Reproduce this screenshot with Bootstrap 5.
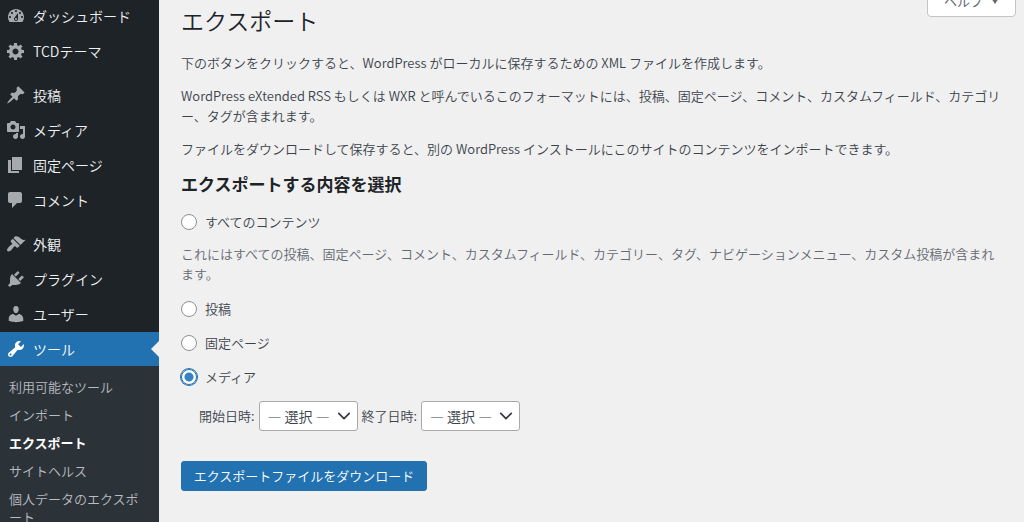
<!DOCTYPE html>
<html lang="ja">
<head>
<meta charset="utf-8">
<meta name="viewport" content="width=device-width, initial-scale=1">
<title>エクスポート</title>
<link href="https://cdn.jsdelivr.net/npm/bootstrap@5.3.0/dist/css/bootstrap.min.css" rel="stylesheet">
<style>
body { background: #f0f0f1; color: #3c434a; font: 350 13px/20px "Noto Sans CJK JP", sans-serif; }
.side { width: 159px; background: #1d2327; margin-top: -1px; }
.side-group { display: grid; gap: 1px; margin: 0 0 10px; }
.side-group:last-child { margin: 0; }
.side-link { height: 34px; padding: 0 0 1px 6px; gap: 7px; font-size: 14px; color: #f0f0f1; position: relative; }
.side-link svg { width: 20px; height: 20px; fill: #a7aaad; }
.side-link.current { background: #2271b1; color: #fff; }
.side-link.current svg { fill: #fff; }
.side-link.current::after { content: ""; position: absolute; right: 0; top: 9px; border: 8px solid transparent; border-right-color: #f0f0f1; border-left-width: 0; }
.side-sub { background: #2c3338; padding: 7px 0; margin-top: -1px; }
.side-sub a { display: block; padding: 5px 9px; line-height: 18px; color: #b9bcc0; text-decoration: none; }
.side-sub a.current { color: #fff; font-weight: 700; }
.page { padding: 0 8px 0 22px; }
.page-title { font-size: 23px; line-height: 30px; font-weight: 350; color: #1d2327; margin: 5px 0 18px; }
.help-btn { width: 89px; height: 32px; margin-top: -15px; background: #fff; border: 1px solid #c3c4c7; border-radius: 0 0 4px 4px; color: #646970; font-size: 13px; }
.copy p { margin-bottom: 13px; padding-right: 12px; }
.section-title { font-size: 17px; line-height: 24px; font-weight: 700; color: #1d2327; margin: 13px 0 16px; }
.choice { display: flex; align-items: center; gap: 8px; height: 20px; margin-bottom: 14px; }
.choice .form-check-input { width: 16px; height: 16px; margin: 0; border: 1px solid #8c8f94; background: #fff; box-shadow: none; }
.choice .form-check-input:checked { border-color: #2271b1; box-shadow: 0 0 0 1px #2271b1; background: radial-gradient(circle, #3582c4 4px, #fff 5px); }
.hint { color: #646970; margin: -2px 0 15px; padding-right: 12px; }
.dates { gap: 4px; padding-left: 18px; margin-bottom: 30px; }
.date-select { width: 99px; height: 30px; padding: 0 24px 0 8px; font-size: 14px; font-weight: 350; line-height: 28px; color: #3c434a; border: 1px solid #a7aaad; border-radius: 3px; background-color: #fff; background-position: right 6px center; background-size: 14px 14px; }
.go-btn { height: 30px; width: 246px; padding: 0; font-size: 13px; font-weight: 350; line-height: 28px; color: #fff; background: #2271b1; border: 1px solid #2271b1; border-radius: 3px; }
</style>
</head>
<body>
<div class="d-flex vh-100 overflow-hidden">
  <nav class="side flex-shrink-0" aria-label="メインメニュー">
    <div class="side-group">
      <a href="#" class="side-link d-flex align-items-center text-decoration-none"><svg viewBox="0 0 20 20"><path fill-rule="evenodd" d="M3.76 16h12.48c1.1-1.37 1.76-3.11 1.76-5 0-4.42-3.58-8-8-8s-8 3.58-8 8c0 1.89.66 3.63 1.76 5zM10 4c.55 0 1 .45 1 1s-.45 1-1 1-1-.45-1-1 .45-1 1-1zM6 6c.55 0 1 .45 1 1s-.45 1-1 1-1-.45-1-1 .45-1 1-1zm8 0c.55 0 1 .45 1 1s-.45 1-1 1-1-.45-1-1 .45-1 1-1zm-5.37 5.55L12 7v6c0 1.1-.9 2-2 2s-2-.9-2-2c0-.57.24-1.08.63-1.45zM4 10c.55 0 1 .45 1 1s-.45 1-1 1-1-.45-1-1 .45-1 1-1zm12 0c.55 0 1 .45 1 1s-.45 1-1 1-1-.45-1-1 .45-1 1-1zm-5 3c0-.55-.45-1-1-1s-1 .45-1 1 .45 1 1 1 1-.45 1-1z"/></svg>ダッシュボード</a>
      <a href="#" class="side-link d-flex align-items-center text-decoration-none"><svg viewBox="0 0 20 20"><path fill-rule="evenodd" d="M18 12h-2.18c-.17.7-.44 1.35-.81 1.93l1.54 1.54-2.1 2.1-1.54-1.54c-.58.36-1.23.63-1.91.79V19H8v-2.18c-.68-.16-1.33-.43-1.91-.79l-1.54 1.54-2.12-2.12 1.54-1.54c-.36-.58-.63-1.23-.79-1.91H1V9.03h2.17c.16-.7.44-1.35.8-1.94L2.43 5.55l2.1-2.1 1.54 1.54c.58-.37 1.24-.64 1.93-.81V2h3v2.18c.68.16 1.33.43 1.91.79l1.54-1.54 2.12 2.12-1.54 1.54c.36.59.64 1.24.8 1.94H18V12zm-8.5 1.5c1.66 0 3-1.34 3-3s-1.34-3-3-3-3 1.34-3 3 1.34 3 3 3z"/></svg>TCDテーマ</a>
    </div>
    <div class="side-group">
      <a href="#" class="side-link d-flex align-items-center text-decoration-none"><svg viewBox="0 0 20 20"><path d="M10.44 3.02l1.82-1.82 6.36 6.35-1.83 1.82c-1.05-.68-2.48-.57-3.41.36l-.75.75c-.92.93-1.04 2.35-.35 3.41l-1.83 1.82-2.41-2.41-2.8 2.79c-.42.42-3.38 2.71-3.8 2.29s1.86-3.39 2.28-3.81l2.79-2.79L4.1 9.36l1.83-1.82c1.05.69 2.48.57 3.4-.36l.75-.75c.93-.92 1.05-2.35.36-3.41z"/></svg>投稿</a>
      <a href="#" class="side-link d-flex align-items-center text-decoration-none"><svg viewBox="0 0 20 20"><path fill-rule="evenodd" d="M13 11V4c0-.55-.45-1-1-1h-1.67L9 1H5L3.67 3H2c-.55 0-1 .45-1 1v7c0 .55.45 1 1 1h10c.55 0 1-.45 1-1zM7 4.5c1.38 0 2.5 1.12 2.5 2.5S8.38 9.5 7 9.5 4.5 8.38 4.5 7 5.62 4.5 7 4.5zM14 6h5v10.5c0 1.38-1.12 2.5-2.5 2.5S14 17.88 14 16.5s1.12-2.5 2.5-2.5c.17 0 .34.02.5.05V9h-3V6zm-4 8.05V13h2v3.5c0 1.38-1.12 2.5-2.5 2.5S7 17.88 7 16.5 8.12 14 9.5 14c.17 0 .34.02.5.05z"/></svg>メディア</a>
      <a href="#" class="side-link d-flex align-items-center text-decoration-none"><svg viewBox="0 0 20 20"><path d="M6 15V2h10v13H6zm-1 1h8v2H2V5h3v11z"/></svg>固定ページ</a>
      <a href="#" class="side-link d-flex align-items-center text-decoration-none"><svg viewBox="0 0 20 20"><path d="M4 2h10c1.1 0 2 .9 2 2v7c0 1.1-.9 2-2 2h-3l-5 5v-5H4c-1.1 0-2-.9-2-2V4c0-1.1.9-2 2-2z"/></svg>コメント</a>
    </div>
    <div class="side-group">
      <a href="#" class="side-link d-flex align-items-center text-decoration-none"><svg viewBox="0 0 20 20"><path d="M14.48 11.06L7.41 3.99l1.5-1.5c.5-.56 2.3-.47 3.51.32 1.21.8 1.43 1.28 2.91 2.1 1.18.64 2.45 1.26 4.45.85zm-.71.71L6.7 4.7 4.93 6.47c-.39.39-.39 1.02 0 1.41l1.06 1.06c.39.39.39 1.03 0 1.42-.6.6-1.43 1.11-2.21 1.69-.35.26-.7.53-1.01.84C1.43 14.23.4 16.08 1.4 17.07c.99 1 2.84-.03 4.18-1.36.31-.31.58-.66.85-1.02.57-.78 1.08-1.61 1.69-2.21.39-.39 1.02-.39 1.41 0l1.06 1.06c.39.39 1.02.39 1.41 0z"/></svg>外観</a>
      <a href="#" class="side-link d-flex align-items-center text-decoration-none"><svg viewBox="0 0 20 20"><path d="M13.11 4.36L9.87 7.6 8 5.73l3.24-3.24c.35-.34 1.05-.2 1.56.32.52.51.66 1.21.31 1.55zm-8 1.77l.91-1.12 9.01 9.01-1.19.84c-.71.71-2.63 1.16-3.82 1.16H6.14L4.9 17.26c-.59.59-1.54.59-2.12 0-.59-.58-.59-1.53 0-2.12l1.24-1.24v-3.88c0-1.13.4-3.19 1.09-3.89zm7.26 3.97l3.24-3.24c.34-.35 1.04-.21 1.55.31.52.51.66 1.21.31 1.55l-3.24 3.25z"/></svg>プラグイン</a>
      <a href="#" class="side-link d-flex align-items-center text-decoration-none"><svg viewBox="0 0 20 20"><path d="M10 9.25c-2.27 0-2.73-3.44-2.73-3.44C7 4.02 7.82 2 9.97 2c2.16 0 2.98 2.02 2.71 3.81 0 0-.41 3.44-2.68 3.44zm0 2.57L12.72 10c2.39 0 4.52 2.33 4.52 4.53v2.49s-3.65 1.13-7.24 1.13c-3.65 0-7.24-1.13-7.24-1.13v-2.49c0-2.25 1.94-4.48 4.47-4.48z"/></svg>ユーザー</a>
      <a href="#" class="side-link current d-flex align-items-center text-decoration-none" aria-current="true"><svg viewBox="0 0 20 20"><path fill-rule="evenodd" d="M16.68 9.77c-1.34 1.34-3.3 1.67-4.95.99l-5.41 6.52c-.99.99-2.59.99-3.58 0s-.99-2.59 0-3.57l6.52-5.42c-.68-1.65-.35-3.61.99-4.95 1.28-1.28 3.12-1.62 4.72-1.06l-2.89 2.89 2.82 2.82 2.86-2.87c.53 1.58.18 3.39-1.08 4.65zM3.81 16.21c.4.39 1.04.39 1.43 0 .4-.4.4-1.04 0-1.43-.39-.4-1.03-.4-1.43 0-.39.39-.39 1.03 0 1.43z"/></svg>ツール</a>
      <div class="side-sub">
        <a href="#">利用可能なツール</a>
        <a href="#">インポート</a>
        <a href="#" class="current" aria-current="page">エクスポート</a>
        <a href="#">サイトヘルス</a>
        <a href="#">個人データのエクスポート</a>
      </div>
    </div>
  </nav>
  <main class="page flex-grow-1">
    <header class="d-flex justify-content-between align-items-start">
      <h1 class="page-title">エクスポート</h1>
      <button type="button" class="help-btn d-flex align-items-center justify-content-center gap-2">ヘルプ <svg width="8" height="6" viewBox="0 0 8 6" fill="currentColor"><path d="M0 0h8L4 6z"/></svg></button>
    </header>
    <div class="copy">
      <p>下のボタンをクリックすると、WordPress がローカルに保存するための XML ファイルを作成します。</p>
      <p>WordPress eXtended RSS もしくは WXR と呼んでいるこのフォーマットには、投稿、固定ページ、コメント、カスタムフィールド、カテゴリー、タグが含まれます。</p>
      <p>ファイルをダウンロードして保存すると、別の WordPress インストールにこのサイトのコンテンツをインポートできます。</p>
    </div>
    <h2 class="section-title">エクスポートする内容を選択</h2>
    <form>
      <div class="choice"><input class="form-check-input" type="radio" name="content" id="c-all"><label for="c-all">すべてのコンテンツ</label></div>
      <p class="hint">これにはすべての投稿、固定ページ、コメント、カスタムフィールド、カテゴリー、タグ、ナビゲーションメニュー、カスタム投稿が含まれます。</p>
      <div class="choice"><input class="form-check-input" type="radio" name="content" id="c-posts"><label for="c-posts">投稿</label></div>
      <div class="choice"><input class="form-check-input" type="radio" name="content" id="c-pages"><label for="c-pages">固定ページ</label></div>
      <div class="choice"><input class="form-check-input" type="radio" name="content" id="c-media" checked><label for="c-media">メディア</label></div>
      <div class="dates d-flex align-items-center">
        <label for="d-start">開始日時:</label>
        <select class="form-select date-select" id="d-start"><option>— 選択 —</option></select>
        <label for="d-end">終了日時:</label>
        <select class="form-select date-select" id="d-end"><option>— 選択 —</option></select>
      </div>
      <button type="submit" class="btn go-btn">エクスポートファイルをダウンロード</button>
    </form>
  </main>
</div>
<script src="https://cdn.jsdelivr.net/npm/bootstrap@5.3.0/dist/js/bootstrap.bundle.min.js"></script>
</body>
</html>
